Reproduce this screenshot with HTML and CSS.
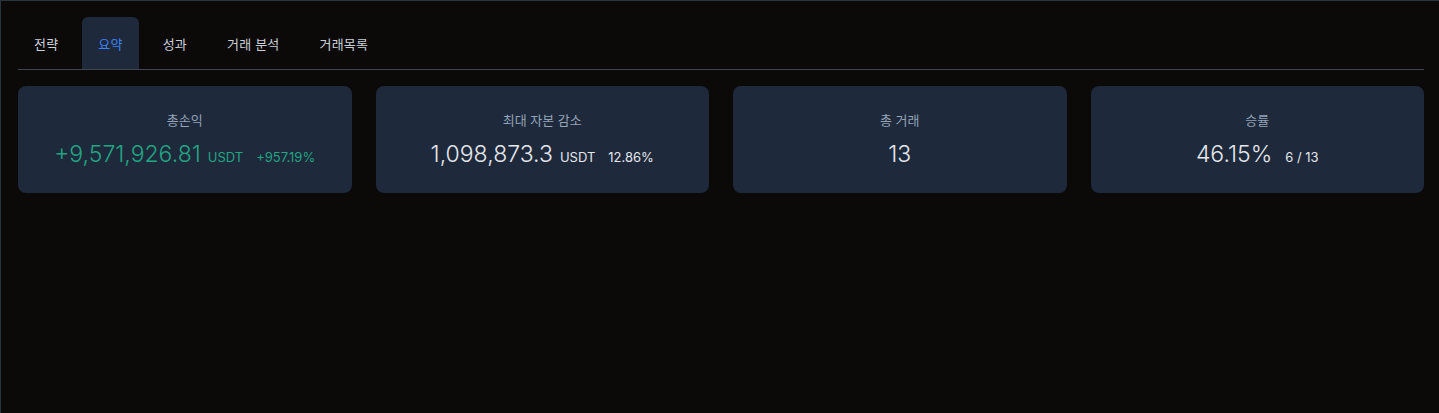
FILE: index.html
```html
<!DOCTYPE html>
<html lang="ko">
<head>
<meta charset="utf-8">
<title>요약</title>
<link rel="stylesheet" href="styles.css">
</head>
<body>
<div class="frame">
  <nav class="tabs">
    <div class="tab">전략</div>
    <div class="tab active">요약</div>
    <div class="tab">성과</div>
    <div class="tab">거래 분석</div>
    <div class="tab">거래목록</div>
  </nav>
  <section class="cards">
    <div class="card">
      <div class="label">총손익</div>
      <div class="value green"><span class="big">+9,571,926.81</span><span class="unit">USDT</span><span class="extra">+957.19%</span></div>
    </div>
    <div class="card">
      <div class="label">최대 자본 감소</div>
      <div class="value"><span class="big">1,098,873.3</span><span class="unit">USDT</span><span class="extra">12.86%</span></div>
    </div>
    <div class="card">
      <div class="label">총 거래</div>
      <div class="value"><span class="big">13</span></div>
    </div>
    <div class="card">
      <div class="label">승률</div>
      <div class="value"><span class="big">46.15%</span><span class="extra">6 / 13</span></div>
    </div>
  </section>
</div>
</body>
</html>
```
FILE: styles.css
```css
* { box-sizing: border-box; }
html, body {
  margin: 0;
  padding: 0;
  background: #0b0a09;
  overflow: hidden;
}
body {
  font-family: Inter, "Noto Sans CJK KR", sans-serif;
  color: #e5e7eb;
  width: 1439px;
  height: 413px;
}
.frame {
  width: 1439px;
  height: 413px;
  border-top: 1px solid #2b3242;
  border-left: 1px solid #2b3242;
  padding: 16px 15px 0 17px;
  background: #0b0a09;
}
.tabs {
  display: flex;
  gap: 8px;
  border-bottom: 1px solid #3f4553;
  height: 53px;
}
.tab {
  height: 52px;
  padding: 0 16px;
  display: flex;
  align-items: center;
  font-size: 13px;
  letter-spacing: 0.2px;
  color: #cbd0d8;
  border-radius: 6px 6px 0 0;
}
.tab.active {
  background: #1e293b;
  color: #3b82f6;
}
.cards {
  margin-top: 16px;
  display: grid;
  grid-template-columns: repeat(4, 1fr);
  gap: 24px;
}
.card {
  background: #1e293b;
  border-radius: 8px;
  height: 107px;
  padding: 24px 16px 0;
  display: flex;
  flex-direction: column;
  align-items: center;
  gap: 8px;
}
.label {
  font-size: 13px;
  line-height: 20px;
  color: #94a3b8;
}
.value {
  display: flex;
  align-items: baseline;
  line-height: 33px;
  color: #e5e7eb;
}
.value.green { color: #22a583; }
.big {
  font-size: 23px;
  font-weight: 300;
}
.unit {
  font-size: 13px;
  margin-left: 7px;
}
.extra {
  font-size: 13px;
  margin-left: 13px;
}
```
